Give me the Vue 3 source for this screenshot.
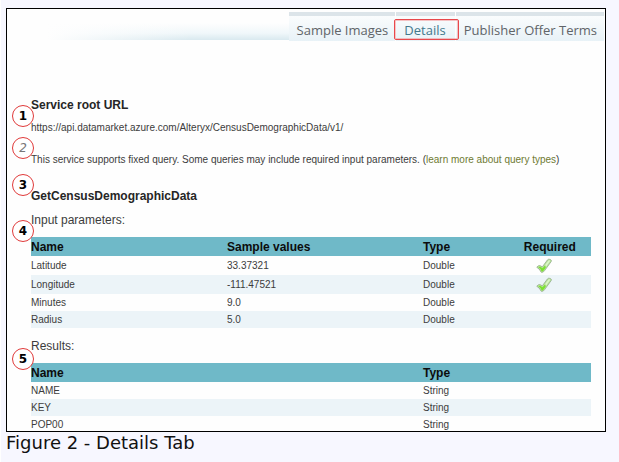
<script setup>
const tabs = [
  { label: 'Sample Images', active: false },
  { label: 'Details', active: true },
  { label: 'Publisher Offer Terms', active: false },
]
const inputs = [
  { name: 'Latitude', sample: '33.37321', type: 'Double', required: true },
  { name: 'Longitude', sample: '-111.47521', type: 'Double', required: true },
  { name: 'Minutes', sample: '9.0', type: 'Double', required: false },
  { name: 'Radius', sample: '5.0', type: 'Double', required: false },
]
const results = [
  { name: 'NAME', type: 'String' },
  { name: 'KEY', type: 'String' },
  { name: 'POP00', type: 'String' },
]
</script>

<template>
  <figure class="figure">
    <div class="frame">
      <header class="bar">
        <div class="swoosh"></div>
        <nav class="tabs">
          <a v-for="tab in tabs" :key="tab.label" href="#" class="tab" :class="{ active: tab.active }">{{ tab.label }}</a>
        </nav>
      </header>
      <main class="content">
        <section class="block root">
          <span class="marker">1</span>
          <h2>Service root URL</h2>
          <p>https://api.datamarket.azure.com/Alteryx/CensusDemographicData/v1/</p>
        </section>
        <section class="block note">
          <span class="marker faint">2</span>
          <p>This service supports fixed query. Some queries may include required input parameters. (<a href="#">learn more about query types</a>)</p>
        </section>
        <section class="block query">
          <span class="marker">3</span>
          <h2>GetCensusDemographicData</h2>
        </section>
        <section class="block params">
          <span class="marker">4</span>
          <h3>Input parameters:</h3>
          <table>
            <colgroup><col class="wide"><col class="wide"><col class="mid"><col></colgroup>
            <thead>
              <tr><th>Name</th><th>Sample values</th><th>Type</th><th>Required</th></tr>
            </thead>
            <tbody>
              <tr v-for="row in inputs" :key="row.name" :class="{ tall: row.required }">
                <td>{{ row.name }}</td>
                <td>{{ row.sample }}</td>
                <td>{{ row.type }}</td>
                <td class="req">
                  <svg v-if="row.required" class="check" viewBox="0 0 16 16" role="img" aria-label="Required">
                    <path d="M.8 9.3Q2.2 7.2 3.8 7.6L6.4 8.8 11.4 2Q12.2 1 13.4 1.3L14.8 1.8Q15.8 2.4 15.2 3.5L8.6 12.6Q7.4 14.4 5.8 14.4Q4.8 14.2 4.4 12.9Q3.4 10.8 .8 9.3Z" fill="#b9e59a" stroke="#93ab8a" stroke-width=".8" stroke-linejoin="round" />
                    <path d="M2.4 9.2Q3.6 8.2 4.6 9L6.5 10.2 9 7.6 9.8 9.4 7.6 12.4Q6.4 13.9 5.6 13.2Q5 10.8 2.4 9.2Z" fill="#7be032" />
                    <path d="M9.2 7.1 12.4 2.7Q13.2 2 14.2 2.8L10.3 8.2Z" fill="#dcf6ca" />
                  </svg>
                </td>
              </tr>
            </tbody>
          </table>
        </section>
        <section class="block results">
          <span class="marker">5</span>
          <h3>Results:</h3>
          <table>
            <colgroup><col class="double"><col></colgroup>
            <thead>
              <tr><th>Name</th><th>Type</th></tr>
            </thead>
            <tbody>
              <tr v-for="row in results" :key="row.name">
                <td>{{ row.name }}</td>
                <td>{{ row.type }}</td>
              </tr>
            </tbody>
          </table>
        </section>
      </main>
    </div>
    <figcaption>Figure 2 - Details Tab</figcaption>
  </figure>
</template>

<style>
body {
  background: #f7f7ff;
}
</style>

<style scoped>
.figure {
  margin: 0;
  padding: 8px 13px 8px 5px;
  border-left: 1px solid #fff;
}
.frame {
  border: 1px solid #000;
  background: #fefefe;
  overflow: hidden;
  font-family: "Liberation Sans", Arial, sans-serif;
  color: #3c3c3c;
}
.bar {
  display: flex;
  padding: 3px 1px 0 40px;
}
.swoosh {
  flex: 1;
  height: 17px;
  margin-top: 11px;
  background:
    linear-gradient(to right, #fefefe 0%, rgba(254, 254, 254, 0) 60%),
    linear-gradient(to bottom, #fefefe 0%, #f0f7fa 60%, #d9e9ef 100%);
}
.tabs {
  display: flex;
  gap: 1px;
}
.tab {
  position: relative;
  border-top: 4px solid #dce4e9;
  padding: 5px 7px 2px 8px;
  background: linear-gradient(to bottom, #fafcfd, #e8f2f7);
  font-family: "Open Sans", "Noto Sans", sans-serif;
  font-size: 13px;
  line-height: 18px;
  color: #606468;
  text-decoration: none;
  white-space: nowrap;
}
.tab.active {
  z-index: 1;
  padding-right: 9px;
  color: #43798c;
}
.tab.active::after {
  content: "";
  position: absolute;
  inset: 3px -4px 1px -2px;
  border: 1px solid #e8484c;
  border-radius: 2px;
  box-shadow: inset 0 0 0 1px rgba(240, 110, 112, 0.4);
}
.content {
  padding: 56px 14px 0 24px;
}
.block {
  position: relative;
}
h2,
h3,
p {
  margin: 0;
}
h2 {
  font-size: 12px;
  line-height: 16px;
  color: #262626;
}
h3 {
  margin-bottom: 9px;
  font-size: 12px;
  font-weight: 400;
  line-height: 16px;
}
p {
  font-size: 10px;
  line-height: 14px;
}
p a {
  color: #6e7a32;
  text-decoration: none;
}
.root p {
  margin-top: 8px;
}
.note {
  margin-top: 18px;
}
.query {
  margin-top: 21px;
}
.params {
  margin-top: 8px;
}
.results {
  height: 93px;
  margin-top: 10px;
}
.marker {
  position: absolute;
  left: -19px;
  top: 8px;
  box-sizing: border-box;
  width: 22px;
  height: 22px;
  border: 1px solid #e03a3a;
  border-radius: 50%;
  background: #fff;
  font-family: "DejaVu Sans", sans-serif;
  font-size: 12px;
  font-weight: 700;
  line-height: 20px;
  text-align: center;
  color: #000;
}
.note .marker {
  top: -16px;
}
.query .marker {
  top: -14px;
}
.results .marker {
  top: 10px;
}
.marker.faint {
  font-style: italic;
  font-weight: 400;
  color: #777;
}
table {
  width: 100%;
  table-layout: fixed;
  border-collapse: collapse;
  text-align: left;
}
.wide {
  width: 35%;
}
.mid {
  width: 18%;
}
.double {
  width: 70%;
}
th {
  height: 19px;
  padding: 0;
  background: #6fb9c8;
  font-size: 12px;
  line-height: 16px;
  color: #0c0c0c;
}
td {
  height: 17px;
  padding: 0;
  font-size: 10px;
  line-height: 14px;
}
.tall td {
  height: 19px;
}
tbody tr:nth-child(even) {
  background: #ecf4f8;
}
.req {
  padding-left: 12px;
}
.check {
  display: block;
  width: 16px;
  height: 16px;
}
figcaption {
  font-family: "DejaVu Sans", Verdana, sans-serif;
  font-size: 18px;
  line-height: 22px;
  color: #111;
}
</style>
